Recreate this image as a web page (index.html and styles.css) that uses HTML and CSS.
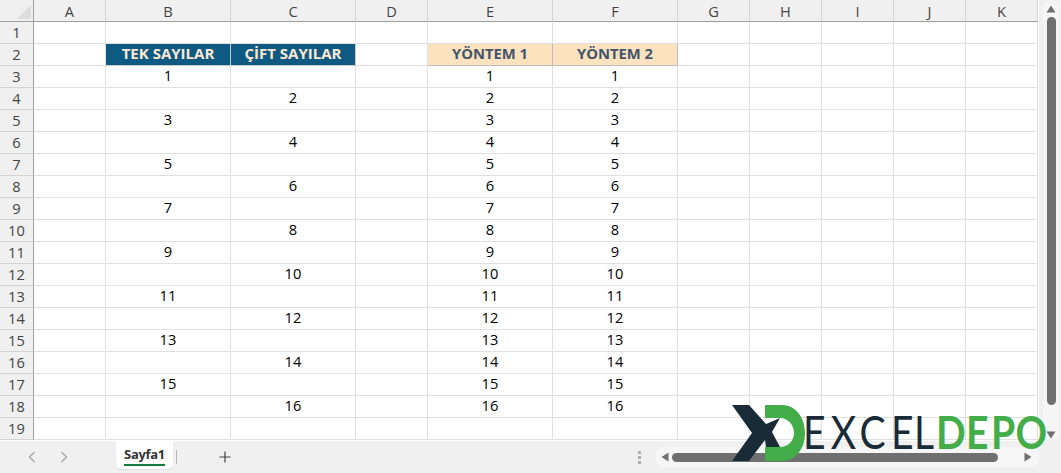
FILE: index.html
```html
<!DOCTYPE html>
<html lang="tr">
<head>
<meta charset="utf-8">
<title>Sayfa1</title>
<link rel="stylesheet" href="styles.css">
</head>
<body>
<div class="app">
  <div class="main">
    <div class="sheet">
      <div class="corner"><svg class="corner-mark" viewBox="0 0 14 14"><path d="M14 0V14H0Z"/></svg></div>
      <div class="ch">A</div><div class="ch">B</div><div class="ch">C</div><div class="ch">D</div><div class="ch">E</div><div class="ch">F</div><div class="ch">G</div><div class="ch">H</div><div class="ch">I</div><div class="ch">J</div><div class="ch">K</div>

      <div class="rh">1</div><div class="c"></div><div class="c"></div><div class="c"></div><div class="c"></div><div class="c"></div><div class="c"></div><div class="c"></div><div class="c"></div><div class="c"></div><div class="c"></div><div class="c"></div>
      <div class="rh">2</div><div class="c"></div><div class="c hd-blue">TEK SAYILAR</div><div class="c hd-blue">ÇİFT SAYILAR</div><div class="c"></div><div class="c hd-peach">YÖNTEM 1</div><div class="c hd-peach">YÖNTEM 2</div><div class="c"></div><div class="c"></div><div class="c"></div><div class="c"></div><div class="c"></div>
      <div class="rh">3</div><div class="c"></div><div class="c">1</div><div class="c"></div><div class="c"></div><div class="c">1</div><div class="c">1</div><div class="c"></div><div class="c"></div><div class="c"></div><div class="c"></div><div class="c"></div>
      <div class="rh">4</div><div class="c"></div><div class="c"></div><div class="c">2</div><div class="c"></div><div class="c">2</div><div class="c">2</div><div class="c"></div><div class="c"></div><div class="c"></div><div class="c"></div><div class="c"></div>
      <div class="rh">5</div><div class="c"></div><div class="c">3</div><div class="c"></div><div class="c"></div><div class="c">3</div><div class="c">3</div><div class="c"></div><div class="c"></div><div class="c"></div><div class="c"></div><div class="c"></div>
      <div class="rh">6</div><div class="c"></div><div class="c"></div><div class="c">4</div><div class="c"></div><div class="c">4</div><div class="c">4</div><div class="c"></div><div class="c"></div><div class="c"></div><div class="c"></div><div class="c"></div>
      <div class="rh">7</div><div class="c"></div><div class="c">5</div><div class="c"></div><div class="c"></div><div class="c">5</div><div class="c">5</div><div class="c"></div><div class="c"></div><div class="c"></div><div class="c"></div><div class="c"></div>
      <div class="rh">8</div><div class="c"></div><div class="c"></div><div class="c">6</div><div class="c"></div><div class="c">6</div><div class="c">6</div><div class="c"></div><div class="c"></div><div class="c"></div><div class="c"></div><div class="c"></div>
      <div class="rh">9</div><div class="c"></div><div class="c">7</div><div class="c"></div><div class="c"></div><div class="c">7</div><div class="c">7</div><div class="c"></div><div class="c"></div><div class="c"></div><div class="c"></div><div class="c"></div>
      <div class="rh">10</div><div class="c"></div><div class="c"></div><div class="c">8</div><div class="c"></div><div class="c">8</div><div class="c">8</div><div class="c"></div><div class="c"></div><div class="c"></div><div class="c"></div><div class="c"></div>
      <div class="rh">11</div><div class="c"></div><div class="c">9</div><div class="c"></div><div class="c"></div><div class="c">9</div><div class="c">9</div><div class="c"></div><div class="c"></div><div class="c"></div><div class="c"></div><div class="c"></div>
      <div class="rh">12</div><div class="c"></div><div class="c"></div><div class="c">10</div><div class="c"></div><div class="c">10</div><div class="c">10</div><div class="c"></div><div class="c"></div><div class="c"></div><div class="c"></div><div class="c"></div>
      <div class="rh">13</div><div class="c"></div><div class="c">11</div><div class="c"></div><div class="c"></div><div class="c">11</div><div class="c">11</div><div class="c"></div><div class="c"></div><div class="c"></div><div class="c"></div><div class="c"></div>
      <div class="rh">14</div><div class="c"></div><div class="c"></div><div class="c">12</div><div class="c"></div><div class="c">12</div><div class="c">12</div><div class="c"></div><div class="c"></div><div class="c"></div><div class="c"></div><div class="c"></div>
      <div class="rh">15</div><div class="c"></div><div class="c">13</div><div class="c"></div><div class="c"></div><div class="c">13</div><div class="c">13</div><div class="c"></div><div class="c"></div><div class="c"></div><div class="c"></div><div class="c"></div>
      <div class="rh">16</div><div class="c"></div><div class="c"></div><div class="c">14</div><div class="c"></div><div class="c">14</div><div class="c">14</div><div class="c"></div><div class="c"></div><div class="c"></div><div class="c"></div><div class="c"></div>
      <div class="rh">17</div><div class="c"></div><div class="c">15</div><div class="c"></div><div class="c"></div><div class="c">15</div><div class="c">15</div><div class="c"></div><div class="c"></div><div class="c"></div><div class="c"></div><div class="c"></div>
      <div class="rh">18</div><div class="c"></div><div class="c"></div><div class="c">16</div><div class="c"></div><div class="c">16</div><div class="c">16</div><div class="c"></div><div class="c"></div><div class="c"></div><div class="c"></div><div class="c"></div>
      <div class="rh">19</div><div class="c"></div><div class="c"></div><div class="c"></div><div class="c"></div><div class="c"></div><div class="c"></div><div class="c"></div><div class="c"></div><div class="c"></div><div class="c"></div><div class="c"></div>
    </div>
    <div class="vscroll">
      <div class="vtrack">
        <svg class="arrow" viewBox="0 0 10 8"><path d="M5 0.5 9.5 7.5H0.5Z"/></svg>
        <div class="vthumb"></div>
        <svg class="arrow" viewBox="0 0 10 8"><path d="M5 7.5 0.5 0.5H9.5Z"/></svg>
      </div>
    </div>
  </div>
  <div class="tabbar">
    <div class="nav">
      <svg class="chev" viewBox="0 0 10 12"><path d="M7.5 1 2.5 6l5 5"/></svg>
      <svg class="chev" viewBox="0 0 10 12"><path d="M2.5 1l5 5-5 5"/></svg>
    </div>
    <div class="tab"><span class="tab-label">Sayfa1</span></div>
    <div class="tab-sep"></div>
    <svg class="plus" viewBox="0 0 12 12"><path d="M6 0.5v11M0.5 6h11"/></svg>
    <div class="dots"><i></i><i></i><i></i></div>
    <div class="htrack">
      <svg class="arrow-h" viewBox="0 0 8 10"><path d="M0.5 5 7.5 0.5V9.5Z"/></svg>
      <div class="hthumb"></div>
      <svg class="arrow-h" viewBox="0 0 8 10"><path d="M7.5 5 0.5 0.5V9.5Z"/></svg>
    </div>
  </div>
  <svg class="logo" viewBox="0 0 331 60" aria-label="EXCELDEPO">
    <path class="logo-dark" d="M2 2H19L36 21 50 15 42 29 50 44H36L35 37 19 58H2L22 30Z"/>
    <path class="logo-green" d="M35 2H52C66 2 75 15 75 30 75 45 66 58 52 58H35V44H50C58 44 64 38 64 30 64 22 58 15 50 15H35Z"/>
    <text class="logo-text logo-excel" transform="scale(.85 1)" x="85.9 118.5 152.5 189.5 216.5" y="46">EXCEL</text>
    <text class="logo-text logo-depo" transform="scale(.85 1)" x="242.4 277.6 307 336" y="46">DEPO</text>
  </svg>
</div>
</body>
</html>
```
FILE: styles.css
```css
* { box-sizing: border-box; }
html, body { margin: 0; padding: 0; }
body { width: 1061px; height: 473px; overflow: hidden; background: #f0f0f0; }
.app { position: relative; display: flex; flex-direction: column; width: 1061px; height: 473px; font-family: "Open Sans", "Noto Sans", sans-serif; }
.main { display: flex; height: 441px; background: #fff; }
.sheet {
  display: grid;
  grid-template-columns: 34px 72px 125px 125px 72px 125px 125px 72px 72px 72px 72px 72px;
  grid-template-rows: repeat(20, 22px);
  width: 1038px;
  height: 441px;
  overflow: hidden;
  background: #fff;
}
.corner { background: #f0f0f0; border-right: 1px solid #9f9f9f; border-bottom: 1px solid #9f9f9f; display: flex; align-items: flex-end; justify-content: flex-end; padding: 0 2px 2px 0; }
.corner-mark { width: 14px; height: 14px; fill: #dcdcdc; }
.ch {
  display: flex; align-items: center; justify-content: center;
  background: #f0f0f0; color: #444;
  font-size: 14.67px;
  border-right: 1px solid #d4d4d4; border-bottom: 1px solid #9f9f9f;
}
.rh {
  display: flex; align-items: center; justify-content: center;
  background: #f0f0f0; color: #444;
  font-size: 14.67px; padding-bottom: 2px;
  border-right: 1px solid #9f9f9f; border-bottom: 1px solid #d4d4d4;
}
.c {
  display: flex; align-items: center; justify-content: center;
  color: #000; font-size: 14.67px; line-height: 1; padding-bottom: 3px;
  border-right: 1px solid #e0e0e0; border-bottom: 1px solid #e0e0e0;
}
.hd-blue { background: #0f5a82; color: #fbe9d4; font-weight: 700; font-size: 15px; border-right-color: #c9c9c9; border-bottom-color: #c9c9c9; }
.hd-peach { background: #fde2bf; color: #44546a; font-weight: 700; font-size: 14.8px; border-right-color: #bdbdbd; border-bottom-color: #bdbdbd; }
.vscroll { flex: 1; display: flex; justify-content: flex-end; background: #f0f0f0; margin-left: 1px; }
.vtrack { display: flex; flex-direction: column; align-items: center; gap: 4px; width: 16px; height: 441px; margin-right: 2px; padding-top: 5px; background: #f5f5f5; border-radius: 8px; }
.arrow { width: 10px; height: 8px; fill: #6f6f6f; flex: none; }
.vthumb { width: 9px; height: 388px; background: #6f6f6f; border-radius: 5px; flex: none; margin-bottom: 22px; }
.tabbar { display: flex; align-items: center; height: 32px; background: #f0f0f0; }
.nav { display: flex; gap: 22px; width: 116px; padding-left: 27px; }
.chev { width: 10px; height: 12px; fill: none; stroke: #a6a6a6; stroke-width: 1.3; }
.tab { display: flex; justify-content: center; width: 57px; height: 28px; margin-bottom: 4px; padding-top: 4px; background: #fff; border-radius: 0 0 5px 5px; box-shadow: 0 1px 1px #ddd; }
.tab-label { height: 21px; font-size: 13px; letter-spacing: -0.3px; font-weight: 700; color: #333; line-height: 19px; border-bottom: 2px solid #107c41; }
.tab-sep { width: 1px; height: 14px; margin-left: 3px; background: #b5b5b5; }
.plus { width: 12px; height: 12px; margin-left: 42px; fill: none; stroke: #444; stroke-width: 1.2; }
.dots { display: flex; flex-direction: column; gap: 2px; margin-left: 407px; }
.dots i { display: block; width: 3px; height: 3px; background: #b0b0b0; }
.htrack { display: flex; align-items: center; gap: 3px; width: 385px; height: 20px; margin-left: 14px; padding: 0 8px 0 6px; background: #f6f6f6; border-radius: 10px; }
.arrow-h { width: 8px; height: 10px; fill: #6f6f6f; flex: none; }
.hthumb { width: 326px; height: 9px; background: #6f6f6f; border-radius: 5px; flex: none; margin-right: 23px; }
.logo { position: absolute; left: 730px; top: 403px; width: 331px; height: 60px; }
.logo-dark { fill: #1a2b38; }
.logo-green { fill: #43ad49; }
.logo-text { font-family: Lato, "Open Sans", sans-serif; font-size: 46px; }
.logo-excel { fill: #1a2b38; font-weight: 400; }
.logo-depo { fill: #43ad49; font-weight: 700; }
```
